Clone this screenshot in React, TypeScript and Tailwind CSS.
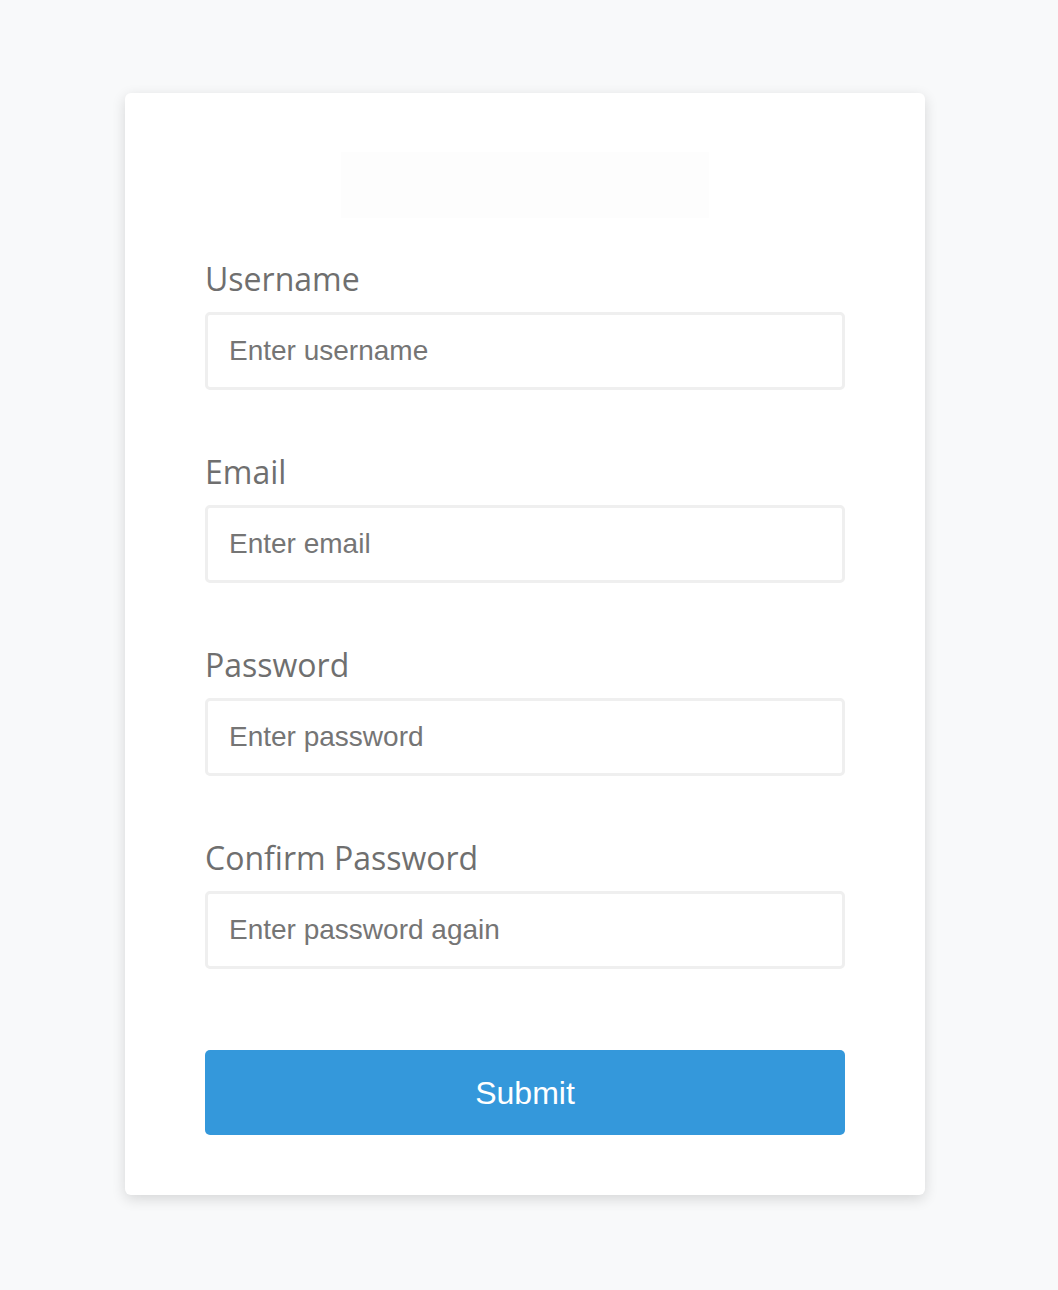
import React from "react";

const fields = [
  { id: "username", label: "Username", type: "text", placeholder: "Enter username" },
  { id: "email", label: "Email", type: "email", placeholder: "Enter email" },
  { id: "password", label: "Password", type: "password", placeholder: "Enter password" },
  { id: "confirm", label: "Confirm Password", type: "password", placeholder: "Enter password again" },
];

export default function App() {
  return (
    <div className="min-h-[1290px] bg-[#f8f9fa] pt-[93px] pb-[95px] font-['Liberation_Sans',Arial,sans-serif]">
      <div className="ml-[125px] w-[800px] rounded-[6px] bg-white px-[80px] pt-[59px] pb-[60px] shadow-[0_4px_14px_rgba(0,0,0,0.14)]">
        <div className="mx-auto h-[66px] w-[368px] bg-[#fdfdfd]" />
        <form className="mt-[36px] flex flex-col">
          {fields.map((f) => (
            <div key={f.id} className="mb-[57px] flex flex-col">
              <label
                htmlFor={f.id}
                className="mb-[8px] font-['Open_Sans',sans-serif] text-[32px] leading-[50px] text-[#6f6f6f]"
              >
                {f.label}
              </label>
              <input
                id={f.id}
                type={f.type}
                placeholder={f.placeholder}
                className="h-[78px] w-full rounded-[5px] border-[3px] border-[#efefef] bg-white px-[21px] text-[28px] text-[#333] placeholder:text-[#757575] outline-none"
              />
            </div>
          ))}
          <button
            type="submit"
            className="mt-[24px] h-[85px] w-full rounded-[5px] bg-[#3498db] text-[32px] text-white"
          >
            Submit
          </button>
        </form>
      </div>
    </div>
  );
}
